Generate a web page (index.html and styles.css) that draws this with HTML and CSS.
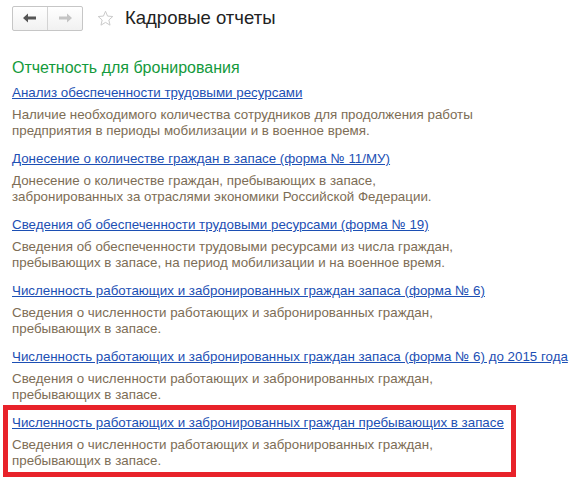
FILE: index.html
```html
<!DOCTYPE html>
<html lang="ru">
<head>
<meta charset="utf-8">
<title>Кадровые отчеты</title>
<link rel="stylesheet" href="styles.css">
</head>
<body>
<div class="page">
  <header class="topbar">
    <div class="nav">
      <button class="nav-btn back" type="button">
        <svg width="14" height="10" viewBox="0 0 14 10"><path d="M0 5 L5 0.5 L5 3.5 L13 3.5 L13 6.5 L5 6.5 L5 9.5 Z" fill="#555"/></svg>
      </button>
      <button class="nav-btn fwd" type="button">
        <svg width="14" height="10" viewBox="0 0 14 10"><path d="M14 5 L9 0.5 L9 3.5 L1 3.5 L1 6.5 L9 6.5 L9 9.5 Z" fill="#c4c4c4"/></svg>
      </button>
    </div>
    <svg class="star" width="17" height="17" viewBox="0 0 24 24"><path d="M12 1.8 L14.9 8.6 L22.3 9.2 L16.7 14.1 L18.4 21.4 L12 17.5 L5.6 21.4 L7.3 14.1 L1.7 9.2 L9.1 8.6 Z" fill="none" stroke="#c9c9c9" stroke-width="1.4" stroke-linejoin="round"/></svg>
    <h1 class="title">Кадровые отчеты</h1>
  </header>

  <h2 class="group">Отчетность для бронирования</h2>

  <div class="list">
    <div class="item">
      <a class="link" href="#">Анализ обеспеченности трудовыми ресурсами</a>
      <p class="desc">Наличие необходимого количества сотрудников для продолжения работы<br>предприятия в периоды мобилизации и в военное время.</p>
    </div>
    <div class="item">
      <a class="link" href="#">Донесение о количестве граждан в запасе (форма № 11/МУ)</a>
      <p class="desc">Донесение о количестве граждан, пребывающих в запасе,<br>забронированных за отраслями экономики Российской Федерации.</p>
    </div>
    <div class="item">
      <a class="link" href="#">Сведения об обеспеченности трудовыми ресурсами (форма № 19)</a>
      <p class="desc">Сведения об обеспеченности трудовыми ресурсами из числа граждан,<br>пребывающих в запасе, на период мобилизации и на военное время.</p>
    </div>
    <div class="item">
      <a class="link" href="#">Численность работающих и забронированных граждан запаса (форма № 6)</a>
      <p class="desc">Сведения о численности работающих и забронированных граждан,<br>пребывающих в запасе.</p>
    </div>
    <div class="item">
      <a class="link" href="#">Численность работающих и забронированных граждан запаса (форма № 6) до 2015 года</a>
      <p class="desc">Сведения о численности работающих и забронированных граждан,<br>пребывающих в запасе.</p>
    </div>
    <div class="item highlighted">
      <a class="link" href="#">Численность работающих и забронированных граждан пребывающих в запасе</a>
      <p class="desc">Сведения о численности работающих и забронированных граждан,<br>пребывающих в запасе.</p>
    </div>
  </div>
</div>
</body>
</html>
```

FILE: styles.css
```css
* { box-sizing: border-box; }
html, body {
  margin: 0;
  padding: 0;
  background: #fff;
}
body {
  font-family: "Liberation Sans", Arial, sans-serif;
  color: #333;
}
.page {
  padding: 5px 0 0 12px;
}
.topbar {
  display: flex;
  align-items: center;
  height: 26px;
}
.nav {
  display: flex;
  width: 71px;
  height: 25px;
  border: 1px solid #c6c6c6;
  border-radius: 2px;
  background: linear-gradient(#ffffff, #f1f1f1);
}
.nav-btn {
  flex: 1;
  display: flex;
  align-items: center;
  justify-content: center;
  border: 0;
  padding: 0;
  margin: 0;
  background: transparent;
}
.nav-btn.back {
  border-right: 1px solid #d3d3d3;
}
.star {
  margin-left: 14px;
  margin-top: 1px;
}
.title {
  margin: 0 0 0 11px;
  font-size: 18.5px;
  font-weight: normal;
  color: #222;
  line-height: 24px;
}
.group {
  margin: 27px 0 0 0;
  font-size: 16px;
  font-weight: normal;
  line-height: 20px;
  color: #149a3c;
}
.list {
  margin-top: 7px;
  display: flex;
  flex-direction: column;
  gap: 12px;
}
.item {
  display: flex;
  flex-direction: column;
  align-items: flex-start;
}
.link {
  font-size: 13.35px;
  line-height: 16px;
  color: #1c4fb4;
  text-decoration: underline;
  white-space: nowrap;
}
.desc {
  margin: 6px 0 0 0;
  font-size: 13.35px;
  line-height: 16px;
  color: #7d6d55;
  white-space: nowrap;
}
.highlighted {
  margin: -10px 0 0 -9px;
  width: 513px;
  padding: 5px 4px 3px 4px;
  border: 5px solid #e8222a;
}
```
